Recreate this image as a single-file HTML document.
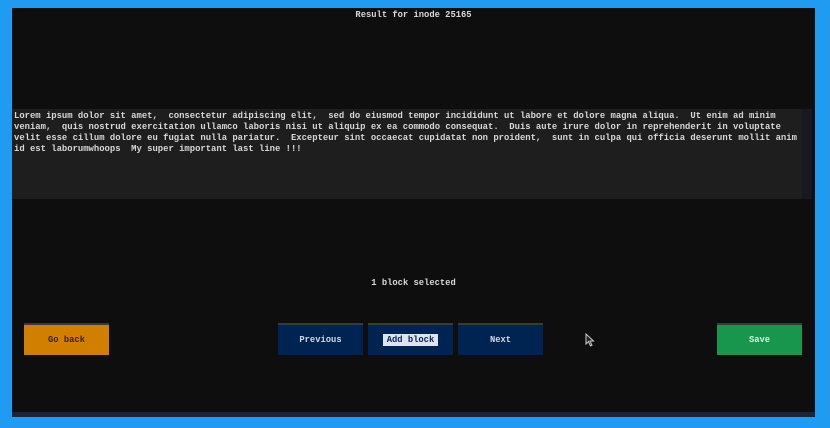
<!DOCTYPE html>
<html><head><style>
html,body{margin:0;padding:0;}
body{width:830px;height:428px;background:#1f9bf2;position:relative;overflow:hidden;font-family:"Liberation Mono","DejaVu Sans Mono",monospace;font-weight:bold;color:#d8d8d8;}
#win{position:absolute;left:12px;top:8px;width:803px;height:406px;background:#0e0e0e;}
#bot{position:absolute;left:12px;top:412px;width:803px;height:5px;background:#1c2535;}
.title{position:absolute;left:0;width:803px;top:2px;text-align:center;font-size:8.8px;line-height:11px;}
#ta{position:absolute;left:0;top:101px;width:790px;height:90px;background:#1e1e1e;font-size:8.9px;line-height:11px;padding:2px 0 0 2px;box-sizing:border-box;white-space:pre;overflow:hidden;}
#sb{position:absolute;left:790px;top:101px;width:10px;height:90px;background:#161a20;}
.sel{position:absolute;left:0;width:803px;top:270px;text-align:center;font-size:8.8px;}
.btn{position:absolute;top:315px;width:85px;height:32px;border-top:2px solid #3a3a3a;box-sizing:border-box;font-size:8.8px;display:flex;align-items:center;justify-content:center;}
.nav{background:#002451;color:#d0d8e8;}
</style></head><body>
<div id="win">
<div class="title">Result for inode 25165</div>
<div id="ta">Lorem ipsum dolor sit amet,  consectetur adipiscing elit,  sed do eiusmod tempor incididunt ut labore et dolore magna aliqua.  Ut enim ad minim
veniam,  quis nostrud exercitation ullamco laboris nisi ut aliquip ex ea commodo consequat.  Duis aute irure dolor in reprehenderit in voluptate
velit esse cillum dolore eu fugiat nulla pariatur.  Excepteur sint occaecat cupidatat non proident,  sunt in culpa qui officia deserunt mollit anim
id est laborumwhoops  My super important last line !!!</div>
<div id="sb"></div>
<div class="sel">1 block selected</div>
<div class="btn" style="left:12px;background:#d07f00;color:#3a2400;">Go back</div>
<div class="btn nav" style="left:266px;">Previous</div>
<div class="btn nav" style="left:356px;"><span style="background:#dde4ee;color:#002451;padding:1px 4px;">Add block</span></div>
<div class="btn nav" style="left:446px;">Next</div>
<div class="btn" style="left:705px;background:#18964e;color:#d8f0e0;">Save</div>
<svg style="position:absolute;left:573px;top:325px" width="10" height="15" viewBox="0 0 10 15"><path d="M1 1 L1 11 L3.5 8.5 L5.5 13 L7 12.3 L5 8 L8.5 8 Z" fill="#222" stroke="#ccc" stroke-width="1"/></svg>
</div>
<div id="bot"></div>
</body></html>
